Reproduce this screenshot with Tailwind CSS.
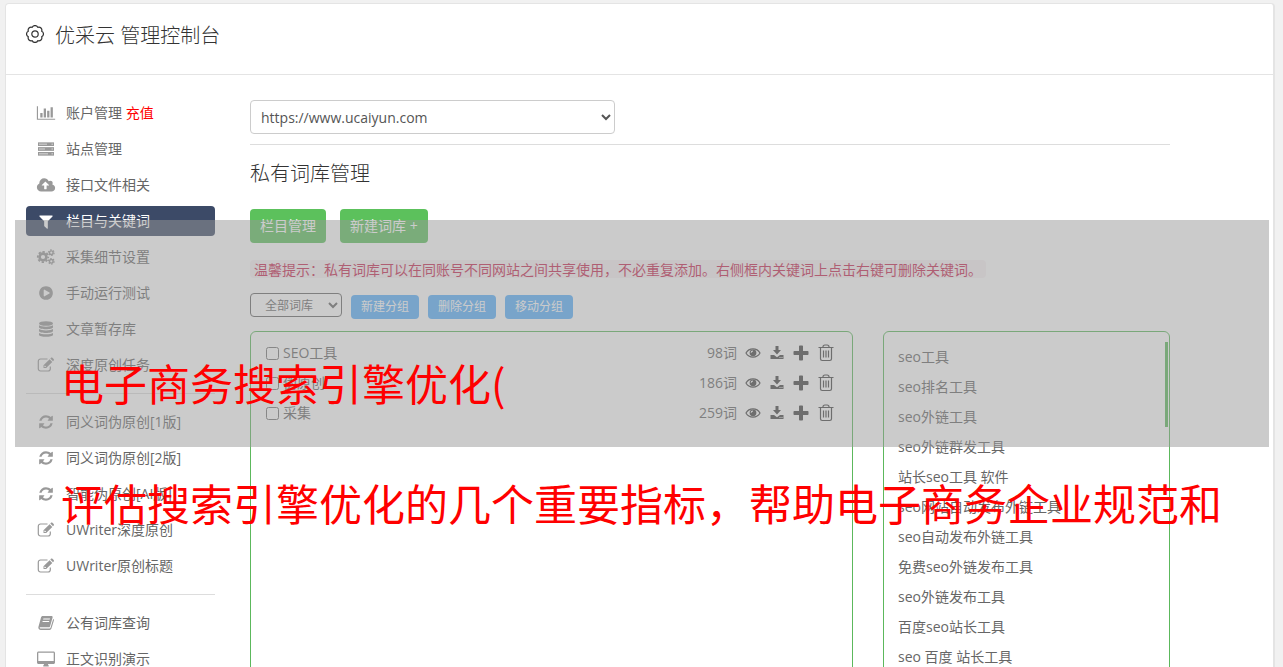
<!DOCTYPE html>
<html lang="zh-CN">
<head>
    <meta charset="UTF-8">
    <meta name="viewport" content="width=device-width, initial-scale=1.0">
    <title>优采云 管理控制台</title>
    <script src="https://cdn.jsdelivr.net/npm/@tailwindcss/browser@4"></script>
</head>
<body class="relative h-screen overflow-hidden bg-[#f1f1f1] pt-[3px] pl-[5px] pr-2 font-['Open_Sans','Noto_Sans_CJK_SC',sans-serif] text-sm text-[#666]">

    <!-- icon sprite -->
    <svg class="hidden" xmlns="http://www.w3.org/2000/svg">
        <symbol id="i-chart" viewBox="0 0 2048 1792"><path d="M640 896v512H384V896h256zm384-512v1024H768V384h256zm1024 1152v128H0V128h128v1408h1920zm-640-896v768h-256V640h256zm384-384v1152h-256V256h256z"/></symbol>
        <symbol id="i-server" viewBox="0 0 18 16"><path fill-opacity=".6" d="M1 1.500h16v3.500H1zM1 6.200h16v3.500H1zM1 11h16v3.500H1z"/><path fill-rule="evenodd" d="M1 1.500h16v3.500H1zM2 2.500v1.500h8V2.500zM14.500 2.500v1.500H16V2.500zM1 6.200h16v3.500H1zM2 7.200v1.500h6V7.200zM14.500 7.200v1.500H16V7.200zM1 11h16v3.500H1zM2 12v1.500h9V12zM14.500 12v1.500H16V12z"/></symbol>
        <symbol id="i-cloud" viewBox="-64 0 1920 1792"><path d="M1216 864q0-14-9-23L855 489q-9-9-23-9t-23 9L458 840q-10 12-10 24 0 14 9 23t23 9h224v352q0 13 9.500 22.500t22.500 9.500h192q13 0 22.500-9.500t9.500-22.500V896h224q13 0 22.500-9.500t9.500-22.500zm640 288q0 159-112.500 271.500T1472 1536H384q-185 0-316.500-131.500T-64 1088q0-130 70-240t188-165q-2-30-2-43 0-212 150-362t362-150q156 0 285.500 87T1178 446q71-62 166-62 106 0 181 75t75 181q0 76-41 138 130 31 213.500 135.500T1856 1152z"/></symbol>
        <symbol id="i-filter" viewBox="0 0 1792 1792"><path d="M1595 295q17 41-14 70l-493 493v742q0 42-39 59-13 5-25 5-27 0-45-19l-256-256q-19-19-19-45V858L211 365q-31-29-14-70 17-39 59-39h1280q42 0 59 39z"/></symbol>
        <symbol id="i-cogs" viewBox="0 0 18 16">
            <g fill="none" stroke="currentColor">
                <circle cx="6" cy="8" r="3.400" stroke-width="2.600"/>
                <circle cx="6" cy="8" r="5.200" stroke-width="1.800" stroke-dasharray="2.300 1.784" stroke-dashoffset="1.150"/>
                <circle cx="14.300" cy="3.700" r="1.800" stroke-width="1.400"/>
                <circle cx="14.300" cy="3.700" r="2.800" stroke-width="1.200" stroke-dasharray="1.500 1.432"/>
                <circle cx="14.300" cy="12.300" r="1.800" stroke-width="1.400"/>
                <circle cx="14.300" cy="12.300" r="2.800" stroke-width="1.200" stroke-dasharray="1.500 1.432"/>
            </g>
        </symbol>
        <symbol id="i-play" viewBox="0 0 1792 1792"><path d="M896 128q209 0 385.500 103T1561 510.500 1664 896t-103 385.500-279.500 279.500T896 1664t-385.500-103T231 1281.500 128 896t103-385.500T510.500 231 896 128zm384 823q32-18 32-55t-32-55L736 521q-31-19-64-1-32 19-32 56v640q0 37 32 56 16 8 32 8 17 0 32-9z"/></symbol>
        <symbol id="i-database" viewBox="0 0 16 16"><ellipse cx="8" cy="2.500" rx="7" ry="2.300"/><path d="M1 4.300c2 1.800 12 1.800 14 0v2c0 2.600-14 2.600-14 0zM1 8.100c2 1.800 12 1.800 14 0v2c0 2.600-14 2.600-14 0zM1 11.900c2 1.800 12 1.800 14 0v1.800c0 2.800-14 2.800-14 0z"/></symbol>
        <symbol id="i-edit" viewBox="0 0 18 16"><path d="M10.500 2H3.500A2.200 2.200 0 0 0 1.300 4.200v7.600A2.200 2.200 0 0 0 3.500 14h7.600a2.200 2.200 0 0 0 2.200-2.200V9.500" fill="none" stroke="currentColor" stroke-width="1.200"/><path fill-rule="evenodd" d="M6.500 8.300L12.600 2.200l2.700 2.700L9.200 11H6.500zM7.400 8.900v1.200h1.200l.5-.5-1.200-1.200zM13.300 1.500l.7-.7c.4-.4 1-.4 1.400 0l1.300 1.300c.4.4.4 1 0 1.400l-.7.7z"/></symbol>
        <symbol id="i-refresh" viewBox="0 0 1792 1792"><path d="M1639 1056q0 5-1 7-64 268-268 434.500T892 1664q-146 0-282.500-55T366 1452l-129 129q-19 19-45 19t-45-19-19-45v-448q0-26 19-45t45-19h448q26 0 45 19t19 45-19 45l-137 137q71 66 161 102t187 36q134 0 250-65t186-179q11-17 53-117 8-23 30-23h192q13 0 22.500 9.500t9.500 22.500zm25-800v448q0 26-19 45t-45 19h-448q-26 0-45-19t-19-45 19-45l138-138q-148-137-349-137-134 0-250 65T460 628q-11 17-53 117-8 23-30 23H178q-13 0-22.500-9.500T146 736v-7q65-268 270-434.500T896 128q146 0 284 55.500T1425 340l130-129q19-19 45-19t45 19 19 45z"/></symbol>
        <symbol id="i-book" viewBox="0 0 18 16"><path fill-rule="evenodd" d="M5.800 1h8.700c.8 0 1.300.6 1.100 1.400l-2.600 9c-.2.600-.6.900-1.200.9H3.600c-.9 0-1 .4-.8.8.2.500.7.500 1.200.5h8.500c.5 0 .8-.3 1-.8l2.700-8.800c.8.400.9.900.7 1.600l-2.500 8c-.3.900-.9 1.400-1.800 1.400H3.800c-1.600 0-2.900-1.500-2.400-3L4 2.500C4.300 1.500 4.900 1 5.800 1zM6.400 3.500l-.3 1h6.600l.3-1zM5.700 6l-.3 1H12l.3-1z"/></symbol>
        <symbol id="i-desktop" viewBox="0 0 18 16"><path fill-rule="evenodd" d="M1.500.500h15c.8 0 1.500.7 1.500 1.500v9.500c0 .8-.7 1.500-1.500 1.500H11c0 1 .8 1.300.8 1.900 0 .300-.2.600-.6.600H6.800c-.4 0-.6-.3-.6-.6 0-.6.800-.9.800-1.900H1.500C.7 13 0 12.300 0 11.500V2C0 1.200.7.500 1.500.500zM1.300 1.800V10h15.400V1.800z"/></symbol>
        <symbol id="i-gear" viewBox="0 0 18 18">
            <g fill="none" stroke="currentColor" stroke-width="1.200" stroke-linejoin="round">
                <path d="M15.650 6.240A3 3 0 0 1 15.650 11.760A3 3 0 0 1 11.760 15.650A3 3 0 0 1 6.240 15.650A3 3 0 0 1 2.350 11.760A3 3 0 0 1 2.350 6.240A3 3 0 0 1 6.240 2.350A3 3 0 0 1 11.760 2.350A3 3 0 0 1 15.650 6.240z"/>
                <circle cx="9" cy="9" r="3.200"/>
            </g>
        </symbol>
        <symbol id="i-eye" viewBox="0 0 16 14"><path d="M1 7C4 1.500 12 1.500 15 7 12 12.500 4 12.500 1 7z" fill="none" stroke="currentColor" stroke-width="1.200"/><path fill-rule="evenodd" d="M8 3.400a3.400 3.400 0 1 1 0 6.800A3.400 3.400 0 0 1 8 3.400zM8 4.400A2.400 2.400 0 0 0 5.600 6.800h1A1.500 1.500 0 0 1 8 5.400z"/></symbol>
        <symbol id="i-download" viewBox="0 0 14 14"><path fill-rule="evenodd" d="M5.500 0h3v4H11L7 8.500 3 4h2.500zM.500 9H4l3 2.200L10 9h3.500v4H.500zM9.500 11v1h1v-1zM11.500 11v1h1v-1z"/></symbol>
        <symbol id="i-plus" viewBox="0 0 16 16"><path d="M6.800.500h2.400c.5 0 .8.3.8.8V6h4.700c.5 0 .8.3.8.8v2.400c0 .5-.3.800-.8.800H10v4.700c0 .5-.3.800-.8.800H6.800c-.5 0-.8-.3-.8-.8V10H1.300c-.5 0-.8-.3-.8-.8V6.800c0-.5.300-.8.800-.8H6V1.300c0-.5.300-.8.800-.8z"/></symbol>
        <symbol id="i-trash" viewBox="0 0 16 18"><path d="M.500 3.500h15M5 3.500V3A1.800 1.800 0 0 1 6.800 1h2.400A1.800 1.800 0 0 1 11 3v.5M2.500 3.500v11.300c0 1 .7 1.700 1.700 1.700h7.600c1 0 1.700-.7 1.700-1.700V3.500M5.500 6.500v7M8 6.500v7M10.500 6.500v7" fill="none" stroke="currentColor" stroke-width="1.200"/></symbol>
    </svg>

    <div class="min-h-screen rounded border border-r-2 border-[#e4e4e4] bg-white">
        <header class="flex h-[71px] items-start gap-[11px] border-b border-[#e4e4e4] pt-[17px] pl-5 text-[#333]">
            <svg class="mt-1 size-[18px]"><use href="#i-gear"/></svg>
            <h1 class="text-xl leading-[30px] font-light">优采云 管理控制台</h1>
        </header>

        <div class="flex gap-[35px] pt-[23px] pr-[103px] pl-5">
            <nav class="w-[189px] shrink-0">
                <ul class="space-y-[6px] leading-[30px]">
                    <li><a href="#" class="flex h-[30px] items-center gap-[10px] pl-[10px]"><svg class="h-4 w-5 fill-[#999]"><use href="#i-chart"/></svg><span>账户管理 <span class="text-[#f00]">充值</span></span></a></li>
                    <li><a href="#" class="flex h-[30px] items-center gap-[10px] pl-[10px]"><svg class="h-4 w-5 fill-[#999]"><use href="#i-server"/></svg>站点管理</a></li>
                    <li><a href="#" class="flex h-[30px] items-center gap-[10px] pl-[10px]"><svg class="h-[17px] w-5 fill-[#999]"><use href="#i-cloud"/></svg>接口文件相关</a></li>
                    <li><a href="#" class="flex h-[30px] items-center gap-[10px] rounded bg-[#3c4a67] pl-[10px] text-white"><svg class="h-[17px] w-5 fill-white"><use href="#i-filter"/></svg>栏目与关键词</a></li>
                    <li><a href="#" class="flex h-[30px] items-center gap-[10px] pl-[10px]"><svg class="h-4 w-5 fill-[#999] text-[#999]"><use href="#i-cogs"/></svg>采集细节设置</a></li>
                    <li><a href="#" class="flex h-[30px] items-center gap-[10px] pl-[10px]"><svg class="h-4 w-5 fill-[#999]"><use href="#i-play"/></svg>手动运行测试</a></li>
                    <li><a href="#" class="flex h-[30px] items-center gap-[10px] pl-[10px]"><svg class="h-4 w-5 fill-[#999]"><use href="#i-database"/></svg>文章暂存库</a></li>
                    <li><a href="#" class="flex h-[30px] items-center gap-[10px] pl-[10px]"><svg class="h-4 w-5 fill-[#999] text-[#999]"><use href="#i-edit"/></svg>深度原创任务</a></li>
                </ul>
                <hr class="my-[13px] border-[#ddd]">
                <ul class="space-y-[6px] leading-[30px]">
                    <li><a href="#" class="flex h-[30px] items-center gap-[10px] pl-[10px]"><svg class="h-4 w-5 fill-[#999]"><use href="#i-refresh"/></svg>同义词伪原创[1版]</a></li>
                    <li><a href="#" class="flex h-[30px] items-center gap-[10px] pl-[10px]"><svg class="h-4 w-5 fill-[#999]"><use href="#i-refresh"/></svg>同义词伪原创[2版]</a></li>
                    <li><a href="#" class="flex h-[30px] items-center gap-[10px] pl-[10px]"><svg class="h-4 w-5 fill-[#999]"><use href="#i-refresh"/></svg>智能伪原创[AI版]</a></li>
                    <li><a href="#" class="flex h-[30px] items-center gap-[10px] pl-[10px]"><svg class="h-4 w-5 fill-[#999] text-[#999]"><use href="#i-edit"/></svg>UWriter深度原创</a></li>
                    <li><a href="#" class="flex h-[30px] items-center gap-[10px] pl-[10px]"><svg class="h-4 w-5 fill-[#999] text-[#999]"><use href="#i-edit"/></svg>UWriter原创标题</a></li>
                </ul>
                <hr class="my-[13px] border-[#ddd]">
                <ul class="space-y-[6px] leading-[30px]">
                    <li><a href="#" class="flex h-[30px] items-center gap-[10px] pl-[10px]"><svg class="h-4 w-5 fill-[#999]"><use href="#i-book"/></svg>公有词库查询</a></li>
                    <li><a href="#" class="flex h-[30px] items-center gap-[10px] pl-[10px]"><svg class="h-4 w-5 fill-[#999]"><use href="#i-desktop"/></svg>正文识别演示</a></li>
                </ul>
            </nav>

            <main class="flex min-w-0 flex-1 flex-col pt-[2px]">
                <select aria-label="站点" class="h-[34px] w-[365px] rounded border border-[#ccc] px-[6px] text-sm text-[#555]">
                    <option>https://www.ucaiyun.com</option>
                </select>
                <hr class="mt-[10px] border-[#ddd]">
                <h2 class="mt-[14px] text-xl leading-[30px] font-light text-[#333]">私有词库管理</h2>

                <div class="mt-5 flex gap-[14px]">
                    <button type="button" class="h-[34px] rounded bg-[#5cc15c] px-[10px] text-white">栏目管理</button>
                    <button type="button" class="h-[34px] rounded bg-[#5cc15c] px-[10px] text-white">新建词库 +</button>
                </div>

                <p class="mt-[17px] flex"><code class="rounded bg-[#f9f2f4] px-1 font-['Noto_Sans_CJK_SC',sans-serif] text-sm leading-[18px] text-[#c7254e]">温馨提示：私有词库可以在同账号不同网站之间共享使用，不必重复添加。右侧框内关键词上点击右键可删除关键词。</code></p>

                <div class="mt-[15px] flex gap-[9px] text-xs">
                    <select aria-label="词库分组" class="h-6 w-[92px] rounded border border-[#666] px-[10px]">
                        <option>全部词库</option>
                    </select>
                    <button type="button" class="mt-[2px] h-6 rounded bg-[#58b0fc] px-[10px] text-white">新建分组</button>
                    <button type="button" class="mt-[2px] h-6 rounded bg-[#58b0fc] px-[10px] text-white">删除分组</button>
                    <button type="button" class="mt-[2px] h-6 rounded bg-[#58b0fc] px-[10px] text-white">移动分组</button>
                </div>

                <div class="mt-3 flex h-[500px] gap-[30px]">
                    <section class="flex-1 rounded-md border border-[#5cb85c] pt-[6px] pr-[18px] pl-[15px]">
                        <div class="flex h-[30px] items-center">
                            <label class="flex items-center gap-1"><input type="checkbox" class="size-[13px]">SEO工具</label>
                            <span class="mr-2 ml-auto">98词</span>
                            <div class="flex items-center gap-[9px] text-[#444]">
                                <button type="button" aria-label="查看"><svg class="h-[14px] w-4 fill-current"><use href="#i-eye"/></svg></button>
                                <button type="button" aria-label="下载"><svg class="size-[14px] fill-current"><use href="#i-download"/></svg></button>
                                <button type="button" aria-label="添加"><svg class="size-4 fill-current"><use href="#i-plus"/></svg></button>
                                <button type="button" aria-label="删除"><svg class="h-[18px] w-4"><use href="#i-trash"/></svg></button>
                            </div>
                        </div>
                        <div class="flex h-[30px] items-center">
                            <label class="flex items-center gap-1"><input type="checkbox" class="size-[13px]">伪原创</label>
                            <span class="mr-2 ml-auto">186词</span>
                            <div class="flex items-center gap-[9px] text-[#444]">
                                <button type="button" aria-label="查看"><svg class="h-[14px] w-4 fill-current"><use href="#i-eye"/></svg></button>
                                <button type="button" aria-label="下载"><svg class="size-[14px] fill-current"><use href="#i-download"/></svg></button>
                                <button type="button" aria-label="添加"><svg class="size-4 fill-current"><use href="#i-plus"/></svg></button>
                                <button type="button" aria-label="删除"><svg class="h-[18px] w-4"><use href="#i-trash"/></svg></button>
                            </div>
                        </div>
                        <div class="flex h-[30px] items-center">
                            <label class="flex items-center gap-1"><input type="checkbox" class="size-[13px]">采集</label>
                            <span class="mr-2 ml-auto">259词</span>
                            <div class="flex items-center gap-[9px] text-[#444]">
                                <button type="button" aria-label="查看"><svg class="h-[14px] w-4 fill-current"><use href="#i-eye"/></svg></button>
                                <button type="button" aria-label="下载"><svg class="size-[14px] fill-current"><use href="#i-download"/></svg></button>
                                <button type="button" aria-label="添加"><svg class="size-4 fill-current"><use href="#i-plus"/></svg></button>
                                <button type="button" aria-label="删除"><svg class="h-[18px] w-4"><use href="#i-trash"/></svg></button>
                            </div>
                        </div>
                    </section>

                    <section class="flex w-[287px] justify-between rounded-md border border-[#5cb85c] pt-[10px] pr-px pl-[14px]">
                        <ul class="leading-[30px]">
                            <li>seo工具</li>
                            <li>seo排名工具</li>
                            <li>seo外链工具</li>
                            <li>seo外链群发工具</li>
                            <li>站长seo工具 软件</li>
                            <li>seo网站自动发布外链工具</li>
                            <li>seo自动发布外链工具</li>
                            <li>免费seo外链发布工具</li>
                            <li>seo外链发布工具</li>
                            <li>百度seo站长工具</li>
                            <li>seo 百度 站长工具</li>
                        </ul>
                        <div class="h-[85px] w-[3px] bg-[#5cb85c]"></div>
                    </section>
                </div>
            </main>
        </div>
    </div>

    <!-- caption banner over the page -->
    <div class="pointer-events-none absolute top-[220px] right-[14px] left-[15px] h-[227px] bg-[#989898]/50 pt-[102px] pl-[46px] font-['Noto_Sans_CJK_SC',sans-serif] text-[43px] leading-[120px] whitespace-nowrap text-[#f00]">
        <p>电子商务搜索引擎优化(</p>
        <p>评估搜索引擎优化的几个重要指标，帮助电子商务企业规范和</p>
    </div>
</body>
</html>
